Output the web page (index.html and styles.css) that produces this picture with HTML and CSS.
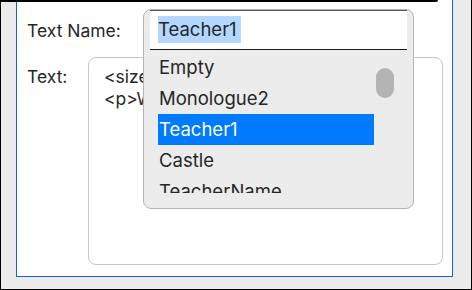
FILE: index.html
```html
<!DOCTYPE html>
<html lang="en">
<head>
<meta charset="utf-8">
<title>Text Editor</title>
<link rel="stylesheet" href="styles.css">
</head>
<body>
<div class="frame">
  <div class="top-strip"></div>
  <div class="panel">
    <div class="form">
      <label class="label">Text Name:</label>
      <div class="name-field"></div>
      <label class="label label-text">Text:</label>
      <div class="textarea">
        <div class="line">&lt;size=20&gt;</div>
        <div class="line">&lt;p&gt;Welcome&lt;/p&gt;</div>
      </div>
    </div>
  </div>
  <div class="popup">
    <div class="combo-input"><span class="sel">Teacher1</span></div>
    <div class="list-wrap">
      <ul class="list">
        <li class="item">Empty</li>
        <li class="item">Monologue2</li>
        <li class="item active">Teacher1</li>
        <li class="item">Castle</li>
        <li class="item">TeacherName</li>
      </ul>
      <div class="scroll-track"><div class="thumb"></div></div>
    </div>
  </div>
</div>
</body>
</html>
```
FILE: styles.css
```css
* { box-sizing: border-box; }
html, body { margin: 0; padding: 0; }
body {
  font-family: Inter, "Noto Sans", "Liberation Sans", sans-serif;
  color: #262626;
  background: #ebebeb;
}
.frame {
  position: relative;
  width: 472px;
  height: 290px;
  background: #ebebeb;
  border-left: 1px solid #000;
  border-right: 1px solid #000;
  border-bottom: 1px solid #000;
  overflow: hidden;
}
.top-strip {
  position: absolute;
  left: -1px;
  top: 0;
  width: 438px;
  height: 2px;
  background: #000;
  border-bottom-right-radius: 2px;
  z-index: 3;
}
.panel {
  margin-left: 15px;
  width: 437px;
  height: 277px;
  background: #fff;
  border-left: 1px solid #1464d8;
  border-right: 1px solid #1464d8;
  border-bottom: 1px solid #1464d8;
  padding: 20px 9px 11px 10px;
}
.form {
  display: grid;
  grid-template-columns: 61px 355px;
  grid-template-rows: 22px 208px;
  row-gap: 15px;
}
.label {
  font-size: 17.5px;
  line-height: 22px;
  white-space: nowrap;
}
.label-text { padding-top: 9px; }
.textarea {
  border: 1px solid #c6c6c6;
  border-radius: 8px;
  padding: 8px 15px;
  font-size: 17.5px;
  line-height: 22px;
}
.line { white-space: nowrap; }
.popup {
  position: absolute;
  left: 142px;
  top: 9px;
  width: 271px;
  height: 200px;
  background: #ececec;
  border: 1px solid #b5b5b5;
  border-radius: 8px;
  padding: 0 6px;
  z-index: 2;
}
.combo-input {
  height: 40px;
  background: #fff;
  border-top: 1px solid #555;
  border-bottom: 1px solid #1a1a1a;
  padding: 5px 0 0 8px;
}
.sel {
  display: inline-block;
  background: #b3d7fe;
  font-size: 18.5px;
  line-height: 27px;
  padding-right: 4px;
  color: #262626;
}
.list-wrap {
  display: flex;
  height: 143px;
  overflow: hidden;
}
.list {
  list-style: none;
  margin: 0 0 0 8px;
  padding: 2px 0 0 0;
  width: 216px;
}
.item {
  height: 31px;
  line-height: 31px;
  font-size: 18.5px;
  padding-left: 1px;
  white-space: nowrap;
}
.item.active {
  background: #007aff;
  color: #fff;
}
.scroll-track {
  margin-left: 2px;
  padding-top: 18px;
}
.thumb {
  width: 18px;
  height: 30px;
  border-radius: 9px;
  background: #b4b4b4;
}
```
